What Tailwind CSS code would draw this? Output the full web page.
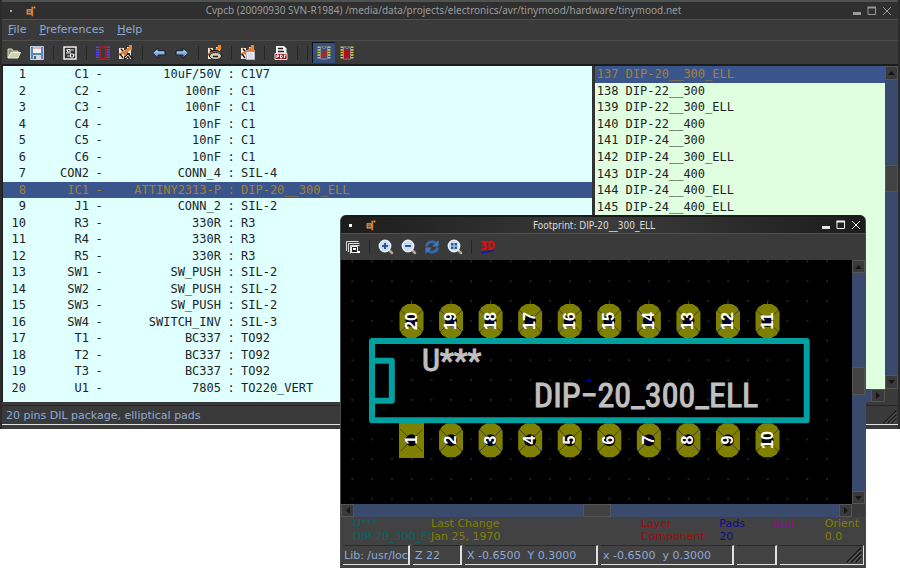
<!DOCTYPE html>
<html lang="en">
<head>
<meta charset="utf-8">
<title>Cvpcb</title>
<script src="https://cdn.jsdelivr.net/npm/@tailwindcss/browser@4"></script>
</head>
<body class="relative min-h-screen overflow-hidden bg-white font-['DejaVu_Sans',sans-serif] text-[11px] text-[#8fa9d8]">

<svg class="absolute size-0">
  <defs>
    <g id="board"><path d="M1 3h5v2h3V2h4v12H9v-3H6v3H1z" fill="#f2ead8"/><path d="M2 2l4 4 5-4 2 2-4 4 2 5H8L5 9l-4 2V8l3-1z" fill="#d8823c"/><path d="M3 4l2 2M2 9l3 4M9 8l3 1" stroke="#2a1c14" stroke-width="1.300"/><path d="M11 0h3v5h-3z" fill="#fa8414"/></g>
    <g id="app"><path d="M3 6h6v6H3z" fill="#e8a868"/><path d="M9.500 3v11" stroke="#e07a20" stroke-width="2"/><path d="M4 8h4M4 10h4" stroke="#2a1a10"/><path d="M11 3h2v2h-2z" fill="#ffa040"/></g>
    <g id="lens"><path d="M10 10l4 4" stroke="#b8a88c" stroke-width="2.500" stroke-linecap="round"/><circle cx="7" cy="7" r="5.700" fill="#c9dcf4" stroke="#e4edf8" stroke-width="1.400"/></g>
    <g id="chip"><path d="M3 1.500v13M13 1.500v13" stroke="#cfc23c" stroke-width="3" stroke-dasharray="1.600 1"/><path d="M4.500 2h7v12h-7z" fill="#3c5078" stroke="#8c8c8c"/><path d="M6.500 2a1.500 1.500 0 003 0" fill="#333" stroke="#8c8c8c"/></g>
    <pattern id="grid" x="401.800" y="251.500" width="19.780" height="19.780" patternUnits="userSpaceOnUse"><rect x="9.400" y="9.400" width="1" height="1" fill="#808080"/></pattern>
    <g id="cross"><path d="M-11-11L11 11M11-11L-11 11" stroke="#3c3c3c" stroke-width="1"/><circle r="6" fill="#000"/><path d="M-4-4L4 4M4-4L-4 4" stroke="#00007c" stroke-width="1"/></g>
    <g id="oval"><path d="M-4-17h8l5 3 3 5v18l-3 5-5 3h-8l-5-3-3-5v-18l3-5z" fill="#808000"/><path d="M0-17v-2" stroke="#555500"/><use href="#cross"/></g>
    <g id="grip"><path d="M2 18L18 2M7 18L18 7M12 18l6-6" stroke="#161616" stroke-width="1.500"/><path d="M4 18L18 4M9 18l9-9M14 18l4-4" stroke="#6a6a6a" stroke-width="1"/></g>
  </defs>
</svg>

<main class="w-full border-x-2 border-[#2b2b2b] bg-[#3a3a3a] pb-1">
  <header class="flex h-5 items-center border-t-2 border-b border-t-[#4e5250] border-b-[#505050] bg-[#2f2f2f] pr-1 text-[#9c9c9c]">
    <span class="ml-2 size-[2px] bg-[#aaa]"></span>
    <svg class="ml-3 size-[14px]" viewBox="0 0 16 16"><use href="#app"/></svg>
    <h1 class="flex-1 text-center font-['Noto_Sans','DejaVu_Sans',sans-serif] text-[10px]">Cvpcb (20090930 SVN-R1984) /media/data/projects/electronics/avr/tinymood/hardware/tinymood.net</h1>
    <button aria-label="Minimize" class="flex h-4 w-[15px] items-center justify-center"><svg class="size-[10px]" viewBox="0 0 10 10"><path d="M1 6h8v3H1z" fill="#999"/></svg></button>
    <button aria-label="Maximize" class="flex h-4 w-[15px] items-center justify-center"><svg class="size-[10px]" viewBox="0 0 10 10"><path d="M1 1.500h7.500v7H1z" fill="none" stroke="#999"/><path d="M.5 1.500h8.500" stroke="#999" stroke-width="2"/></svg></button>
    <button aria-label="Close" class="flex h-4 w-[15px] items-center justify-center"><svg class="size-[10px]" viewBox="0 0 10 10"><path d="M1 1l8 8M9 1L1 9" stroke="#999"/></svg></button>
  </header>
  <nav class="flex h-[21px] items-center gap-[13px] border-b border-[#4c4c4c] px-[6px]">
    <button><u>F</u>ile</button><button><u>P</u>references</button><button><u>H</u>elp</button>
  </nav>
  <div class="flex h-[23px] items-center">
    <button aria-label="Open" class="flex w-[23px] justify-center"><svg class="size-4" viewBox="0 0 16 16"><path d="M2 13V4h4l1 2h5v2" fill="#8d9478" stroke="#d7dcbc"/><path d="M2 13l3-5.500h9.500L12 13z" fill="#cdd3ae" stroke="#eef0dc"/></svg></button>
    <button aria-label="Save" class="flex w-[23px] justify-center"><svg class="size-4" viewBox="0 0 16 16"><path d="M1.500 1.500h13v13h-13z" fill="#5c86b4" stroke="#b9cde2"/><path d="M4 2h8v6H4z" fill="#f4f4f4"/><path d="M4 3h8" stroke="#e07070"/><path d="M4 10h8v5H4z" fill="#d8d8d8"/><path d="M5 11h2v3H5z" fill="#4a5f78"/></svg></button>
    <span class="flex w-[10px] justify-center"><i class="h-[14px] w-px bg-[#262626]"></i></span>
    <button aria-label="Libraries" class="flex w-[23px] justify-center"><svg class="size-4" viewBox="0 0 16 16"><path d="M2 2h12v12H2z" fill="#303030" stroke="#f0f0f0" stroke-width="1.500"/><path d="M4 5h4M4 8h5M8 5h4M5 11h3M9 10h4" stroke="#ddd"/><path d="M5.500 4.500h2.500v2.500H5.500zM8.500 9h3v3h-3z" fill="#303030" stroke="#f4f4f4"/></svg></button>
    <span class="flex w-[10px] justify-center"><i class="h-[14px] w-px bg-[#262626]"></i></span>
    <button aria-label="View footprint" class="flex w-[23px] justify-center"><svg class="size-4" viewBox="0 0 16 16"><path d="M2.500 1.500v13M13.500 1.500v13" stroke="#4a48f0" stroke-width="3" stroke-dasharray="1.500 1"/><path d="M5 2h6v12H5z" fill="#343c38" stroke="#c41420" stroke-width="1.500"/><path d="M7 2.500h2" stroke="#444" stroke-width="2"/></svg></button>
    <button aria-label="Auto associate" class="flex w-[23px] justify-center"><svg class="size-4" viewBox="0 0 16 16"><use href="#board"/><path d="M6 14l4-5 5 5M9 12h5M11 9v5" stroke="#1c1c1c" stroke-width="1.600" fill="none"/><path d="M7 13l3-3 3 4" stroke="#d0d0d0" fill="none"/></svg></button>
    <span class="flex w-[10px] justify-center"><i class="h-[14px] w-px bg-[#262626]"></i></span>
    <button aria-label="Previous" class="flex w-[23px] justify-center"><svg class="size-4" viewBox="0 0 16 16"><path d="M1.500 8l5.500-5V6h7v4H7v3z" fill="#78a8dc" stroke="#17212e"/><path d="M3.500 8L6 5.500V7h7" fill="none" stroke="#bcd6f0"/></svg></button>
    <button aria-label="Next" class="flex w-[23px] justify-center"><svg class="size-4" viewBox="0 0 16 16"><path d="M14.500 8L9 3V6H2v4h7v3z" fill="#78a8dc" stroke="#17212e"/><path d="M12.500 8L10 5.500V7H3" fill="none" stroke="#bcd6f0"/></svg></button>
    <span class="flex w-[10px] justify-center"><i class="h-[14px] w-px bg-[#262626]"></i></span>
    <button aria-label="Automatic" class="flex w-[23px] justify-center"><svg class="size-4" viewBox="0 0 16 16"><use href="#board"/><ellipse cx="8.500" cy="11" rx="6" ry="3.500" fill="#d4cdb8" stroke="#1c1c1c"/><path d="M3 7q5-3 10 0M6 11.500h5" stroke="#1c1c1c" fill="none" stroke-width="1.500"/></svg></button>
    <span class="flex w-[10px] justify-center"><i class="h-[14px] w-px bg-[#262626]"></i></span>
    <button aria-label="Delete associations" class="flex w-[23px] justify-center"><svg class="size-4" viewBox="0 0 16 16"><use href="#board"/><path d="M6.500 5.500h8v9h-8z" fill="#f0f0f4" stroke="#b8b8c0"/><path d="M6 6h9" stroke="#d88060" stroke-width="2"/><path d="M8 9h5M8 11h5M8 13h5" stroke="#c4ccd8"/></svg></button>
    <span class="flex w-[10px] justify-center"><i class="h-[14px] w-px bg-[#262626]"></i></span>
    <button aria-label="Documentation" class="flex w-[23px] justify-center"><svg class="size-4" viewBox="0 0 16 16"><path d="M3 1h8l2.500 2.500V9H3z" fill="#f2f2f2"/><path d="M5 3.500h5M5 6.500h6" stroke="#222" stroke-width="1.500"/><path d="M2 8.500h12v6H2z" fill="#a81420" stroke="#f4e4e4"/><path d="M4 13v-3h1.500v1.500H4M7.500 10v3h1l1-1.500-1-1.500zM11.500 13v-3H13" stroke="#fff" fill="none"/></svg></button>
    <span class="flex w-[10px] justify-center"><i class="h-[14px] w-px bg-[#262626]"></i></span>
    <span class="flex w-[10px] justify-center"><i class="h-[14px] w-px bg-[#262626]"></i></span>
    <button aria-label="Filtered list" aria-pressed="true" class="flex h-[21px] w-[23px] items-center justify-center border-t border-l border-[#0c1220] bg-[#37507e]"><svg class="size-4" viewBox="0 0 16 16"><use href="#chip"/><path d="M5.500 13V9L10.500 4v5l-3 4z" fill="#c41c20"/></svg></button>
    <button aria-label="Full list" class="flex w-[23px] justify-center"><svg class="size-4" viewBox="0 0 16 16"><use href="#chip"/><path d="M5 4h6v9.500H5z" fill="#b01018"/></svg></button>
  </div>

  <div class="flex border-t-2 border-[#1c1c1c] font-['DejaVu_Sans_Mono',monospace] text-[12px] leading-[16px] text-[#1c2424]">
    <section class="min-w-0 flex-[590] border-l border-[#1c1c1c] bg-[#e0ffff] pb-[6px]">
      <table class="h-[330px] w-full table-fixed border-collapse whitespace-pre">
        <colgroup><col class="w-[23px]"><col class="w-[63px]"><col class="w-[20px]"><col class="w-[112px]"><col class="w-[20px]"><col></colgroup>
        <tbody id="parts"></tbody>
      </table>
    </section>
    <section class="flex min-w-0 flex-[304] flex-col border-l-[3px] border-[#333]">
      <div class="flex flex-1">
        <div class="flex-1 bg-[#e0ffe0]">
          <table class="h-[149px] w-full border-collapse whitespace-pre"><tbody id="prints"></tbody></table>
        </div>
        <div class="flex w-[13px] flex-col bg-[#394a6c]">
          <button aria-label="Scroll up" class="flex h-[14px] items-center justify-center border border-[#555] bg-[#3a3a3a]"><svg class="h-[4px] w-[7px]" viewBox="0 0 7 4"><path d="M0 4l3.500-4L7 4z" fill="#151515"/></svg></button>
          <span class="flex-[86]"></span>
          <span class="flex-[25] border border-[#555] bg-[#424242]"></span>
          <span class="flex-[184]"></span>
          <button aria-label="Scroll down" class="flex h-[14px] items-center justify-center border border-[#555] bg-[#3a3a3a]"><svg class="h-[4px] w-[7px]" viewBox="0 0 7 4"><path d="M0 0l3.500 4L7 0z" fill="#151515"/></svg></button>
        </div>
      </div>
      <div class="flex h-[13px] bg-[#3a3a3a] pr-[13px]">
        <span class="flex-1 bg-[#394a6c]"></span>
        <button aria-label="Scroll right" class="flex w-[14px] items-center justify-center border border-[#555]"><svg class="h-[7px] w-[4px]" viewBox="0 0 4 7"><path d="M0 0l4 3.500L0 7z" fill="#151515"/></svg></button>
      </div>
    </section>
  </div>
  <footer class="mt-[3px] flex h-[20px] items-center justify-between border-t border-b border-t-[#262626] border-b-[#e4e4e4] pt-[3px] pl-1">
    <span>20 pins DIL package, elliptical pads</span>
    <svg class="size-4" viewBox="0 0 20 20"><use href="#grip"/></svg>
  </footer>
</main>

<section role="dialog" aria-label="Footprint" class="absolute top-[215px] right-[34px] left-[340px] rounded-t-md border-x border-[#4a4a4a] bg-[#424242] pb-[3px]">
  <header class="flex h-[18px] items-center rounded-t-md border-t-2 border-[#1a1a1a] bg-gradient-to-r from-[#1c1c1c] via-[#3c3c3c] to-[#1c1c1c] pr-[2px] text-[#dcdcdc]">
    <span class="ml-2 size-[3px] bg-white"></span>
    <svg class="ml-3 size-[14px]" viewBox="0 0 16 16"><use href="#app"/></svg>
    <h2 class="flex-1 pr-2 text-center font-['DejaVu_Sans_Condensed','DejaVu_Sans',sans-serif] text-[10px]">Footprint: DIP-20__300_ELL</h2>
    <button aria-label="Minimize" class="flex h-4 w-[15px] items-center justify-center"><svg class="size-[10px]" viewBox="0 0 10 10"><path d="M1 6h8v3H1z" fill="#e4e4e4"/></svg></button>
    <button aria-label="Maximize" class="flex h-4 w-[15px] items-center justify-center"><svg class="size-[10px]" viewBox="0 0 10 10"><path d="M1 1.500h7.500v7H1z" fill="none" stroke="#f4f4f4"/><path d="M.5 1.500h8.500" stroke="#f4f4f4" stroke-width="2"/></svg></button>
    <button aria-label="Close" class="flex h-4 w-[15px] items-center justify-center"><svg class="size-[10px]" viewBox="0 0 10 10"><path d="M1 1l8 8M9 1L1 9" stroke="#f4f4f4"/></svg></button>
  </header>
  <div class="flex h-[27px] items-center border-t border-[#505050] bg-[#3a3a3a]">
    <button aria-label="Options" class="flex w-[23px] justify-center"><svg class="size-4" viewBox="0 0 16 16"><path d="M1.500 12V2.500h12M3.500 13V4.500h11M5.500 14.500v-8h9" fill="none" stroke="#ddd"/><path d="M6.500 7.500h6v6h-6z" fill="#222" stroke="#eee"/><path d="M8 9h3v2H8zM12 12h3v2h-3z" fill="#fff"/></svg></button>
    <span class="flex w-[10px] justify-center"><i class="h-[14px] w-px bg-[#262626]"></i></span>
    <button aria-label="Zoom in" class="flex w-[23px] justify-center"><svg class="size-4" viewBox="0 0 16 16"><use href="#lens"/><path d="M7 4v6M4 7h6" stroke="#2d5590" stroke-width="2"/></svg></button>
    <button aria-label="Zoom out" class="flex w-[23px] justify-center"><svg class="size-4" viewBox="0 0 16 16"><use href="#lens"/><path d="M4 7h6" stroke="#2d5590" stroke-width="2"/></svg></button>
    <button aria-label="Redraw" class="flex w-[23px] justify-center"><svg class="size-4" viewBox="0 0 16 16"><path d="M2.500 7.500a5.500 5 0 019.500-3M13.500 8.500a5.500 5 0 01-9.500 3" fill="none" stroke="#3468ac" stroke-width="3"/><path d="M14.500 1v6.500H8zM1.500 15V8.500H8z" fill="#4478b8"/></svg></button>
    <button aria-label="Zoom auto" class="flex w-[23px] justify-center"><svg class="size-4" viewBox="0 0 16 16"><use href="#lens"/><path d="M4 4h2.500v2.500H4zM7.500 4H10v2.500H7.500zM4 7.500h2.500V10H4zM7.500 7.500H10V10H7.500z" fill="#2d5590"/></svg></button>
    <span class="flex w-[10px] justify-center"><i class="h-[14px] w-px bg-[#262626]"></i></span>
    <button aria-label="3D view" class="flex w-[23px] justify-center"><svg class="size-4" viewBox="0 0 16 16"><path d="M1.500 3H6.500L4 6q3 0 2 3-2 2-4.500 1M9.500 2.500v8M9 3q5.500-1 5 3.500t-5 3.500" fill="none" stroke="#f00808" stroke-width="2"/><path d="M1 14l13-2.500" stroke="#1010c0" stroke-width="1.500"/></svg></button>
  </div>
  <div class="flex bg-black">
    <svg class="h-[244px] min-w-0 flex-1" viewBox="341 260 511 244" preserveAspectRatio="xMinYMin slice">
      <path d="M348 260H834V504H348z" fill="url(#grid)"/>
      <g id="pads"></g>
      <g fill="none" stroke="#00a0a0" stroke-width="6" stroke-linejoin="round"><path d="M372 341h434.700v79.300H372zM372 360.700h19.800v40H372"/></g>
      <g id="nums" fill="#fff" font-family="Liberation Sans, sans-serif" font-size="16" font-weight="bold" text-anchor="middle"></g>
      <path d="M589 378v5M586.500 380.500h5M451 359v4" stroke="#0000a0"/>
      <g fill="#c0c0c0" stroke="#c0c0c0" font-family="Liberation Sans Narrow, Roboto Condensed, DejaVu Sans Condensed, sans-serif">
        <text x="422" y="371" font-size="32">U***</text>
        <text x="646" y="407" font-size="34" text-anchor="middle">DIP−20_300_ELL</text>
      </g>
    </svg>
    <div class="flex w-[13px] flex-col bg-[#394a6c]">
      <button aria-label="Scroll up" class="flex h-[13px] items-center justify-center border border-[#555] bg-[#3a3a3a]"><svg class="h-[4px] w-[7px]" viewBox="0 0 7 4"><path d="M0 4l3.500-4L7 4z" fill="#151515"/></svg></button>
      <span class="flex-[95]"></span>
      <span class="flex-[26] border border-[#555] bg-[#424242]"></span>
      <span class="flex-[97]"></span>
      <button aria-label="Scroll down" class="flex h-[13px] items-center justify-center border border-[#555] bg-[#3a3a3a]"><svg class="h-[4px] w-[7px]" viewBox="0 0 7 4"><path d="M0 0l3.500 4L7 0z" fill="#151515"/></svg></button>
    </div>
  </div>
  <div class="flex h-[13px] bg-[#394a6c]">
    <button aria-label="Scroll left" class="flex w-[13px] items-center justify-center border border-[#555] bg-[#3a3a3a]"><svg class="h-[7px] w-[4px]" viewBox="0 0 4 7"><path d="M4 0L0 3.500 4 7z" fill="#151515"/></svg></button>
    <span class="flex-[230]"></span>
    <span class="flex-[26] border border-[#555] bg-[#424242]"></span>
    <span class="flex-[229]"></span>
    <button aria-label="Scroll right" class="flex w-[13px] items-center justify-center border border-[#555] bg-[#3a3a3a]"><svg class="h-[7px] w-[4px]" viewBox="0 0 4 7"><path d="M0 0l4 3.500L0 7z" fill="#151515"/></svg></button>
    <span class="w-[13px] bg-[#3a3a3a]"></span>
  </div>
  <dl class="grid h-[28px] grid-cols-[78px_209fr_78fr_53fr_52fr_40fr] pl-[12px] leading-[13px] whitespace-nowrap">
    <div class="overflow-hidden text-[#086464]"><dt>U***</dt><dd>DIP-20_300_ELL</dd></div>
    <div class="text-[#808000]"><dt>Last Change</dt><dd>Jan 25, 1970</dd></div>
    <div class="text-[#961010]"><dt>Layer</dt><dd>Component</dd></div>
    <div class="text-[#0c0c94]"><dt>Pads</dt><dd>20</dd></div>
    <div class="text-[#8c108c]"><dt>Stat</dt><dd></dd></div>
    <div class="text-[#808000]"><dt>Orient</dt><dd>0.0</dd></div>
  </dl>
  <footer class="flex h-[20px] gap-[3px] pr-px pl-[2px] leading-[19px] whitespace-nowrap">
    <span class="w-[67px] overflow-hidden border-t border-r-2 border-b border-t-[#2a2a2a] border-r-[#e0e0e0] border-b-[#e0e0e0] pl-px">Lib: /usr/loc</span>
    <span class="w-[49px] border-t border-r-2 border-b border-t-[#2a2a2a] border-r-[#e0e0e0] border-b-[#e0e0e0] pl-[2px]">Z 22</span>
    <span class="flex-[133] border-t border-r-2 border-b border-t-[#2a2a2a] border-r-[#e0e0e0] border-b-[#e0e0e0] pl-[2px] whitespace-pre">X -0.6500  Y 0.3000</span>
    <span class="flex-[133] border-t border-r-2 border-b border-t-[#2a2a2a] border-r-[#e0e0e0] border-b-[#e0e0e0] pl-[2px] whitespace-pre">x -0.6500  y 0.3000</span>
    <span class="w-[40px] border-t border-r-2 border-b border-t-[#2a2a2a] border-r-[#e0e0e0] border-b-[#e0e0e0]"></span>
    <span class="flex w-[84px] justify-end border-t border-r border-b border-t-[#2a2a2a] border-r-[#e0e0e0] border-b-[#e0e0e0]"><svg class="size-[18px]" viewBox="0 0 20 20"><use href="#grip"/></svg></span>
  </footer>
</section>

<script>
const parts = [["C1","10uF/50V","C1V7"],["C2","100nF","C1"],["C3","100nF","C1"],["C4","10nF","C1"],["C5","10nF","C1"],["C6","10nF","C1"],["CON2","CONN_4","SIL-4"],["IC1","ATTINY2313-P","DIP-20__300_ELL"],["J1","CONN_2","SIL-2"],["R3","330R","R3"],["R4","330R","R3"],["R5","330R","R3"],["SW1","SW_PUSH","SIL-2"],["SW2","SW_PUSH","SIL-2"],["SW3","SW_PUSH","SIL-2"],["SW4","SWITCH_INV","SIL-3"],["T1","BC337","TO92"],["T2","BC337","TO92"],["T3","BC337","TO92"],["U1","7805","TO220_VERT"]];
document.getElementById("parts").innerHTML = parts.map(([r,v,f],i) =>
  `<tr class="${i===7 ? "bg-[#3a558c] text-[#a8802c]" : ""}"><td class="p-0 text-right">${i+1}</td><td class="p-0 text-right">${r}</td><td class="p-0 text-center">-</td><td class="p-0 text-right">${v}</td><td class="p-0 text-center">:</td><td class="p-0">${f}</td></tr>`).join("");
const prints = ["DIP-20__300_ELL","DIP-22__300","DIP-22__300_ELL","DIP-22__400","DIP-24__300","DIP-24__300_ELL","DIP-24__400","DIP-24__400_ELL","DIP-24__400_ELL"];
document.getElementById("prints").innerHTML = prints.map((p,i) =>
  `<tr class="${i===0 ? "bg-[#3a558c] text-[#a8802c]" : ""}"><td class="p-0 pl-[2px]">${137+i} ${p}</td></tr>`).join("");
let pads = "", nums = "";
for (let i = 0; i < 10; i++) {
  const x = 411.5 + i * 39.56;
  pads += `<use href="#oval" x="${x}" y="321"/>`;
  pads += i ? `<use href="#oval" x="${x}" y="440.3"/>` : `<path d="M${x-12.5} 423h25v35h-25z" fill="#808000"/><use href="#cross" x="${x}" y="440.3"/>`;
  nums += `<text transform="translate(${x+5} 321) rotate(-90)">${20-i}</text><text transform="translate(${x+5} 440) rotate(-90)">${i+1}</text>`;
}
document.getElementById("pads").innerHTML = pads;
document.getElementById("nums").innerHTML = nums;
</script>
</body>
</html>
